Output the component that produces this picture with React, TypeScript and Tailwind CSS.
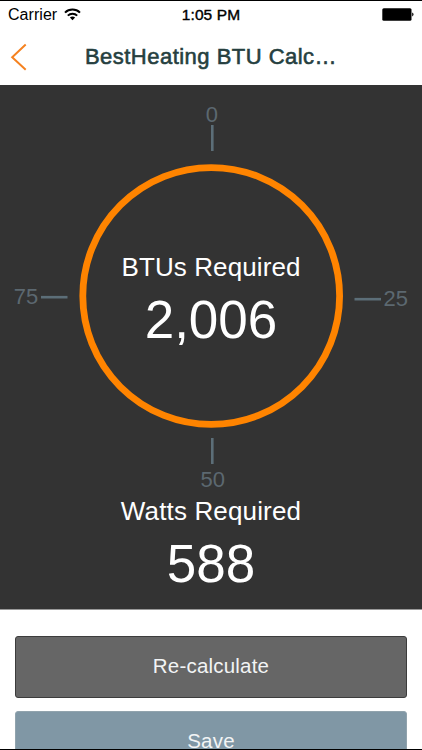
import type { ReactNode } from "react";

interface Tick {
    label: string;
    x: number;
    y: number;
    line: [number, number, number, number];
}

// Coordinates are relative to the top left of the gauge panel
const ticks: Tick[] = [
    { label: '0', x: 211.8, y: 37, line: [212.3, 40, 212.3, 66] },
    { label: '25', x: 395.8, y: 221, line: [354.5, 214.2, 381, 214.2] },
    { label: '50', x: 212.8, y: 402, line: [212.3, 353, 212.3, 379] },
    { label: '75', x: 26, y: 219, line: [41, 212.2, 67.5, 212.2] },
];

function StatusBar() {
    return (
        <div className="h-[27px] grid grid-cols-3 items-center pl-2 pr-2 text-black">
            <div className="flex items-center gap-[7px]">
                <span className="text-[16px] leading-4 tracking-[0.05px]">Carrier</span>
                <svg width="17" height="13" viewBox="0 0 17 13" fill="none" stroke="#000" strokeWidth="2">
                    <path d="M1 4.6a10.8 10.8 0 0 1 15 0" />
                    <path d="M3.8 7.6a6.8 6.8 0 0 1 9.4 0" />
                    <path d="M8.5 12.2 5.9 9.6a3.8 3.8 0 0 1 5.2 0z" fill="#000" stroke="none" />
                </svg>
            </div>
            <span className="justify-self-center whitespace-nowrap text-[15.5px] leading-4 tracking-[0.1px] [-webkit-text-stroke:0.4px_#000]">1:05 PM</span>
            <svg className="justify-self-end" width="32" height="13" viewBox="0 0 32 13">
                <rect x="0.3" y="0.3" width="29.2" height="12.4" rx="1.5" fill="#000" />
                <path d="M30.2 4.6c1.8.6 1.8 3.2 0 3.8z" fill="#000" />
            </svg>
        </div>
    );
}

function Header() {
    return (
        <header className="h-[57px] grid grid-cols-[60px_1fr_60px] items-center">
            <button type="button" aria-label="Back" className="pl-[10px]">
                <svg width="18" height="28" viewBox="0 0 18 28" fill="none" stroke="#f58220" strokeWidth="2">
                    <path d="M15.7 1.6 2.2 14.2l13.5 12.6" />
                </svg>
            </button>
            <h1 className="text-center whitespace-nowrap text-[22px] leading-7 text-[#263f3f] tracking-[0.48px] [-webkit-text-stroke:0.6px_#263f3f]">BestHeating BTU Calc…</h1>
        </header>
    );
}

function Gauge() {
    return (
        <svg className="block" width="422" height="410" viewBox="0 0 422 410" textAnchor="middle">
            <circle cx="211.2" cy="211" r="128.4" fill="none" stroke="#ff8400" strokeWidth="6.8" />
            {ticks.map(t => (
                <g key={t.label}>
                    <line x1={t.line[0]} y1={t.line[1]} x2={t.line[2]} y2={t.line[3]} stroke="#5c6e78" strokeWidth="2.6" />
                    <text x={t.x} y={t.y} fontSize="22" fill="#5c6870">{t.label}</text>
                </g>
            ))}
            <text x="211" y="191" fontSize="26" fill="#fff" textLength="179">BTUs Required</text>
            <text x="211" y="253" fontSize="53" fill="#fff">2,006</text>
        </svg>
    );
}

function Button({ className, children }: { className: string; children: ReactNode }) {
    return (
        <button type="button" className={`h-[62px] shrink-0 rounded-[3px] border pb-[3px] text-[20.5px] leading-6 tracking-[0.2px] text-[#f2f4f5] ${className}`}>
            {children}
        </button>
    );
}

function App() {
    return (
        <div className="w-[422px] h-[750px] overflow-hidden bg-white border-y border-black flex flex-col font-['Liberation_Sans',Arial,sans-serif]">
            <StatusBar />
            <Header />

            <section className="h-[525px] shrink-0 bg-[#333333] border-b border-[#999999] text-white text-center">
                <Gauge />
                <p className="text-[26px] leading-8 tracking-[0.15px]">Watts Required</p>
                <p className="mt-[9px] text-[53px] leading-[56px]">588</p>
            </section>

            <div className="px-[15px] pt-[26px] flex flex-col gap-[13px] flex-1 min-h-0 overflow-hidden">
                <Button className="bg-[#666666] border-[#3c3c3c]">Re-calculate</Button>
                <Button className="bg-[#8097a5] border-[#91a3ad]">Save</Button>
            </div>
        </div>
    );
}

export default App;
